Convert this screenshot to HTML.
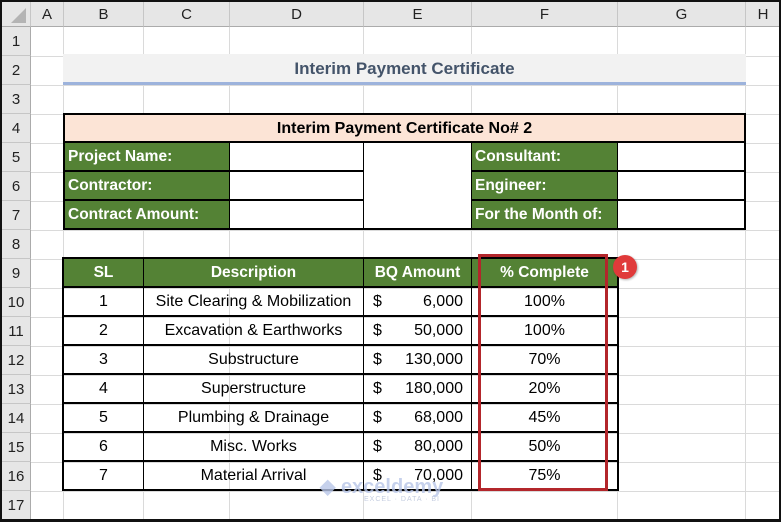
<!DOCTYPE html>
<html><head><meta charset="utf-8"><style>
*{box-sizing:border-box;margin:0;padding:0}
body{width:781px;height:522px;overflow:hidden;background:#fff;font-family:"Liberation Sans",sans-serif;position:relative}
.a{position:absolute}
.ch{position:absolute;top:2px;height:25px;background:#e6e6e6;border-right:1px solid #c6c6c6;border-bottom:1px solid #ababab;font-size:15px;color:#222;text-align:center;line-height:25px}
.rh{position:absolute;left:2px;width:29px;background:#e6e6e6;border-bottom:1px solid #c6c6c6;border-right:1px solid #ababab;font-size:15px;color:#222;text-align:center;line-height:29px;height:29px}
.c{position:absolute;height:29px;line-height:28px;font-size:16px;color:#000;border:1px solid #000;overflow:hidden;white-space:nowrap}
.g{background:#548235;color:#fff;font-weight:bold;padding-left:3px;font-size:15.5px}
.hd{background:#548235;color:#fff;font-weight:bold;text-align:center;font-size:15.5px}
.ctr{text-align:center}
</style></head><body>
<svg class="a" style="left:0;top:0" width="781" height="522">
<g stroke="#dadada" stroke-width="1">
<line x1="63.5" y1="27" x2="63.5" y2="520"/><line x1="143.5" y1="27" x2="143.5" y2="520"/><line x1="229.5" y1="27" x2="229.5" y2="520"/><line x1="363.5" y1="27" x2="363.5" y2="520"/><line x1="471.5" y1="27" x2="471.5" y2="520"/><line x1="617.5" y1="27" x2="617.5" y2="520"/><line x1="745.5" y1="27" x2="745.5" y2="520"/>
<line x1="31" y1="56.5" x2="781" y2="56.5"/><line x1="31" y1="85.5" x2="781" y2="85.5"/><line x1="31" y1="114.5" x2="781" y2="114.5"/><line x1="31" y1="143.5" x2="781" y2="143.5"/><line x1="31" y1="172.5" x2="781" y2="172.5"/><line x1="31" y1="201.5" x2="781" y2="201.5"/><line x1="31" y1="230.5" x2="781" y2="230.5"/><line x1="31" y1="259.5" x2="781" y2="259.5"/><line x1="31" y1="288.5" x2="781" y2="288.5"/><line x1="31" y1="317.5" x2="781" y2="317.5"/><line x1="31" y1="346.5" x2="781" y2="346.5"/><line x1="31" y1="375.5" x2="781" y2="375.5"/><line x1="31" y1="404.5" x2="781" y2="404.5"/><line x1="31" y1="433.5" x2="781" y2="433.5"/><line x1="31" y1="462.5" x2="781" y2="462.5"/><line x1="31" y1="491.5" x2="781" y2="491.5"/>
</g></svg>
<div class="ch" style="left:2px;width:29px"><svg width="29" height="25"><polygon points="24,6 24,21 9,21" fill="#b4b4b4"/></svg></div>
<div class="ch" style="left:31px;width:33px">A</div>
<div class="ch" style="left:64px;width:80px">B</div>
<div class="ch" style="left:144px;width:86px">C</div>
<div class="ch" style="left:230px;width:134px">D</div>
<div class="ch" style="left:364px;width:108px">E</div>
<div class="ch" style="left:472px;width:146px">F</div>
<div class="ch" style="left:618px;width:128px">G</div>
<div class="ch" style="left:746px;width:35px">H</div>
<div class="rh" style="top:27px">1</div><div class="rh" style="top:56px">2</div><div class="rh" style="top:85px">3</div><div class="rh" style="top:114px">4</div><div class="rh" style="top:143px">5</div><div class="rh" style="top:172px">6</div><div class="rh" style="top:201px">7</div><div class="rh" style="top:230px">8</div><div class="rh" style="top:259px">9</div><div class="rh" style="top:288px">10</div><div class="rh" style="top:317px">11</div><div class="rh" style="top:346px">12</div><div class="rh" style="top:375px">13</div><div class="rh" style="top:404px">14</div><div class="rh" style="top:433px">15</div><div class="rh" style="top:462px">16</div><div class="rh" style="top:491px">17</div>
<div class="a" style="left:63px;top:54px;width:683px;height:31px;background:#f2f2f2;border-bottom:3px solid #9db3dc;text-align:center;font-weight:bold;font-size:17px;color:#44546a;line-height:30px">Interim Payment Certificate</div>
<div class="a" style="left:63px;top:113px;width:683px;height:117px;border:2px solid #000;background:#fff"></div>
<div class="c ctr" style="left:63px;top:113px;width:683px;background:#fce4d6;font-weight:bold;border-width:2px 2px 1px 2px;font-size:16px">Interim Payment Certificate No# 2</div>
<div class="c g" style="left:63px;top:142px;width:167px;border-left-width:2px">Project Name:</div>
<div class="c g" style="left:63px;top:171px;width:167px;border-left-width:2px">Contractor:</div>
<div class="c g" style="left:63px;top:200px;width:167px;border-left-width:2px;height:30px;border-bottom-width:2px">Contract Amount:</div>
<div class="c" style="left:229px;top:142px;width:135px"></div>
<div class="c" style="left:229px;top:171px;width:135px"></div>
<div class="c" style="left:229px;top:200px;width:135px;height:30px;border-bottom-width:2px"></div>
<div class="c" style="left:363px;top:142px;width:109px;height:88px;border-bottom-width:2px"></div>
<div class="c g" style="left:471px;top:142px;width:147px">Consultant:</div>
<div class="c g" style="left:471px;top:171px;width:147px">Engineer:</div>
<div class="c g" style="left:471px;top:200px;width:147px;height:30px;border-bottom-width:2px">For the Month of:</div>
<div class="c" style="left:617px;top:142px;width:129px;border-right-width:2px"></div>
<div class="c" style="left:617px;top:171px;width:129px;border-right-width:2px"></div>
<div class="c" style="left:617px;top:200px;width:129px;height:30px;border-right-width:2px;border-bottom-width:2px"></div>
<div class="a" style="left:62px;top:257px;width:557px;height:234px;border:2px solid #000"></div>
<div class="c hd" style="left:63px;top:258px;width:81px">SL</div>
<div class="c hd" style="left:143px;top:258px;width:221px">Description</div>
<div class="c hd" style="left:363px;top:258px;width:109px">BQ Amount</div>
<div class="c hd" style="left:471px;top:258px;width:147px">% Complete</div>

<div class="c ctr" style="left:63px;top:287px;width:81px">1</div><div class="c ctr" style="left:143px;top:287px;width:221px">Site Clearing &amp; Mobilization</div><div class="c" style="left:363px;top:287px;width:109px;padding:0 8px 0 9px"><span>$</span><span style="float:right">6,000</span></div><div class="c ctr" style="left:471px;top:287px;width:147px">100%</div>
<div class="c ctr" style="left:63px;top:316px;width:81px">2</div><div class="c ctr" style="left:143px;top:316px;width:221px">Excavation &amp; Earthworks</div><div class="c" style="left:363px;top:316px;width:109px;padding:0 8px 0 9px"><span>$</span><span style="float:right">50,000</span></div><div class="c ctr" style="left:471px;top:316px;width:147px">100%</div>
<div class="c ctr" style="left:63px;top:345px;width:81px">3</div><div class="c ctr" style="left:143px;top:345px;width:221px">Substructure</div><div class="c" style="left:363px;top:345px;width:109px;padding:0 8px 0 9px"><span>$</span><span style="float:right">130,000</span></div><div class="c ctr" style="left:471px;top:345px;width:147px">70%</div>
<div class="c ctr" style="left:63px;top:374px;width:81px">4</div><div class="c ctr" style="left:143px;top:374px;width:221px">Superstructure</div><div class="c" style="left:363px;top:374px;width:109px;padding:0 8px 0 9px"><span>$</span><span style="float:right">180,000</span></div><div class="c ctr" style="left:471px;top:374px;width:147px">20%</div>
<div class="c ctr" style="left:63px;top:403px;width:81px">5</div><div class="c ctr" style="left:143px;top:403px;width:221px">Plumbing &amp; Drainage</div><div class="c" style="left:363px;top:403px;width:109px;padding:0 8px 0 9px"><span>$</span><span style="float:right">68,000</span></div><div class="c ctr" style="left:471px;top:403px;width:147px">45%</div>
<div class="c ctr" style="left:63px;top:432px;width:81px">6</div><div class="c ctr" style="left:143px;top:432px;width:221px">Misc. Works</div><div class="c" style="left:363px;top:432px;width:109px;padding:0 8px 0 9px"><span>$</span><span style="float:right">80,000</span></div><div class="c ctr" style="left:471px;top:432px;width:147px">50%</div>
<div class="c ctr" style="left:63px;top:461px;width:81px">7</div><div class="c ctr" style="left:143px;top:461px;width:221px">Material Arrival</div><div class="c" style="left:363px;top:461px;width:109px;padding:0 8px 0 9px"><span>$</span><span style="float:right">70,000</span></div><div class="c ctr" style="left:471px;top:461px;width:147px">75%</div>
<div class="a" style="left:320px;top:474px;color:#b8c6e8;font-weight:bold;font-size:20px;opacity:.8">◆ exceldemy</div>
<div class="a" style="left:364px;top:496px;color:#c4cde0;font-size:7px;letter-spacing:1px">EXCEL · DATA · BI</div>
<div class="a" style="left:478px;top:254px;width:130px;height:237px;border:3px solid #b3262b"></div>
<div class="a" style="left:613px;top:255px;width:24px;height:24px;border-radius:50%;background:#e03a3a;color:#fff;font-weight:bold;font-size:14px;text-align:center;line-height:24px;box-shadow:1px 1px 2px rgba(0,0,0,.3)">1</div>
<div class="a" style="left:0;top:0;width:781px;height:522px;border:2px solid #111;border-bottom-width:3px"></div>
</body></html>
